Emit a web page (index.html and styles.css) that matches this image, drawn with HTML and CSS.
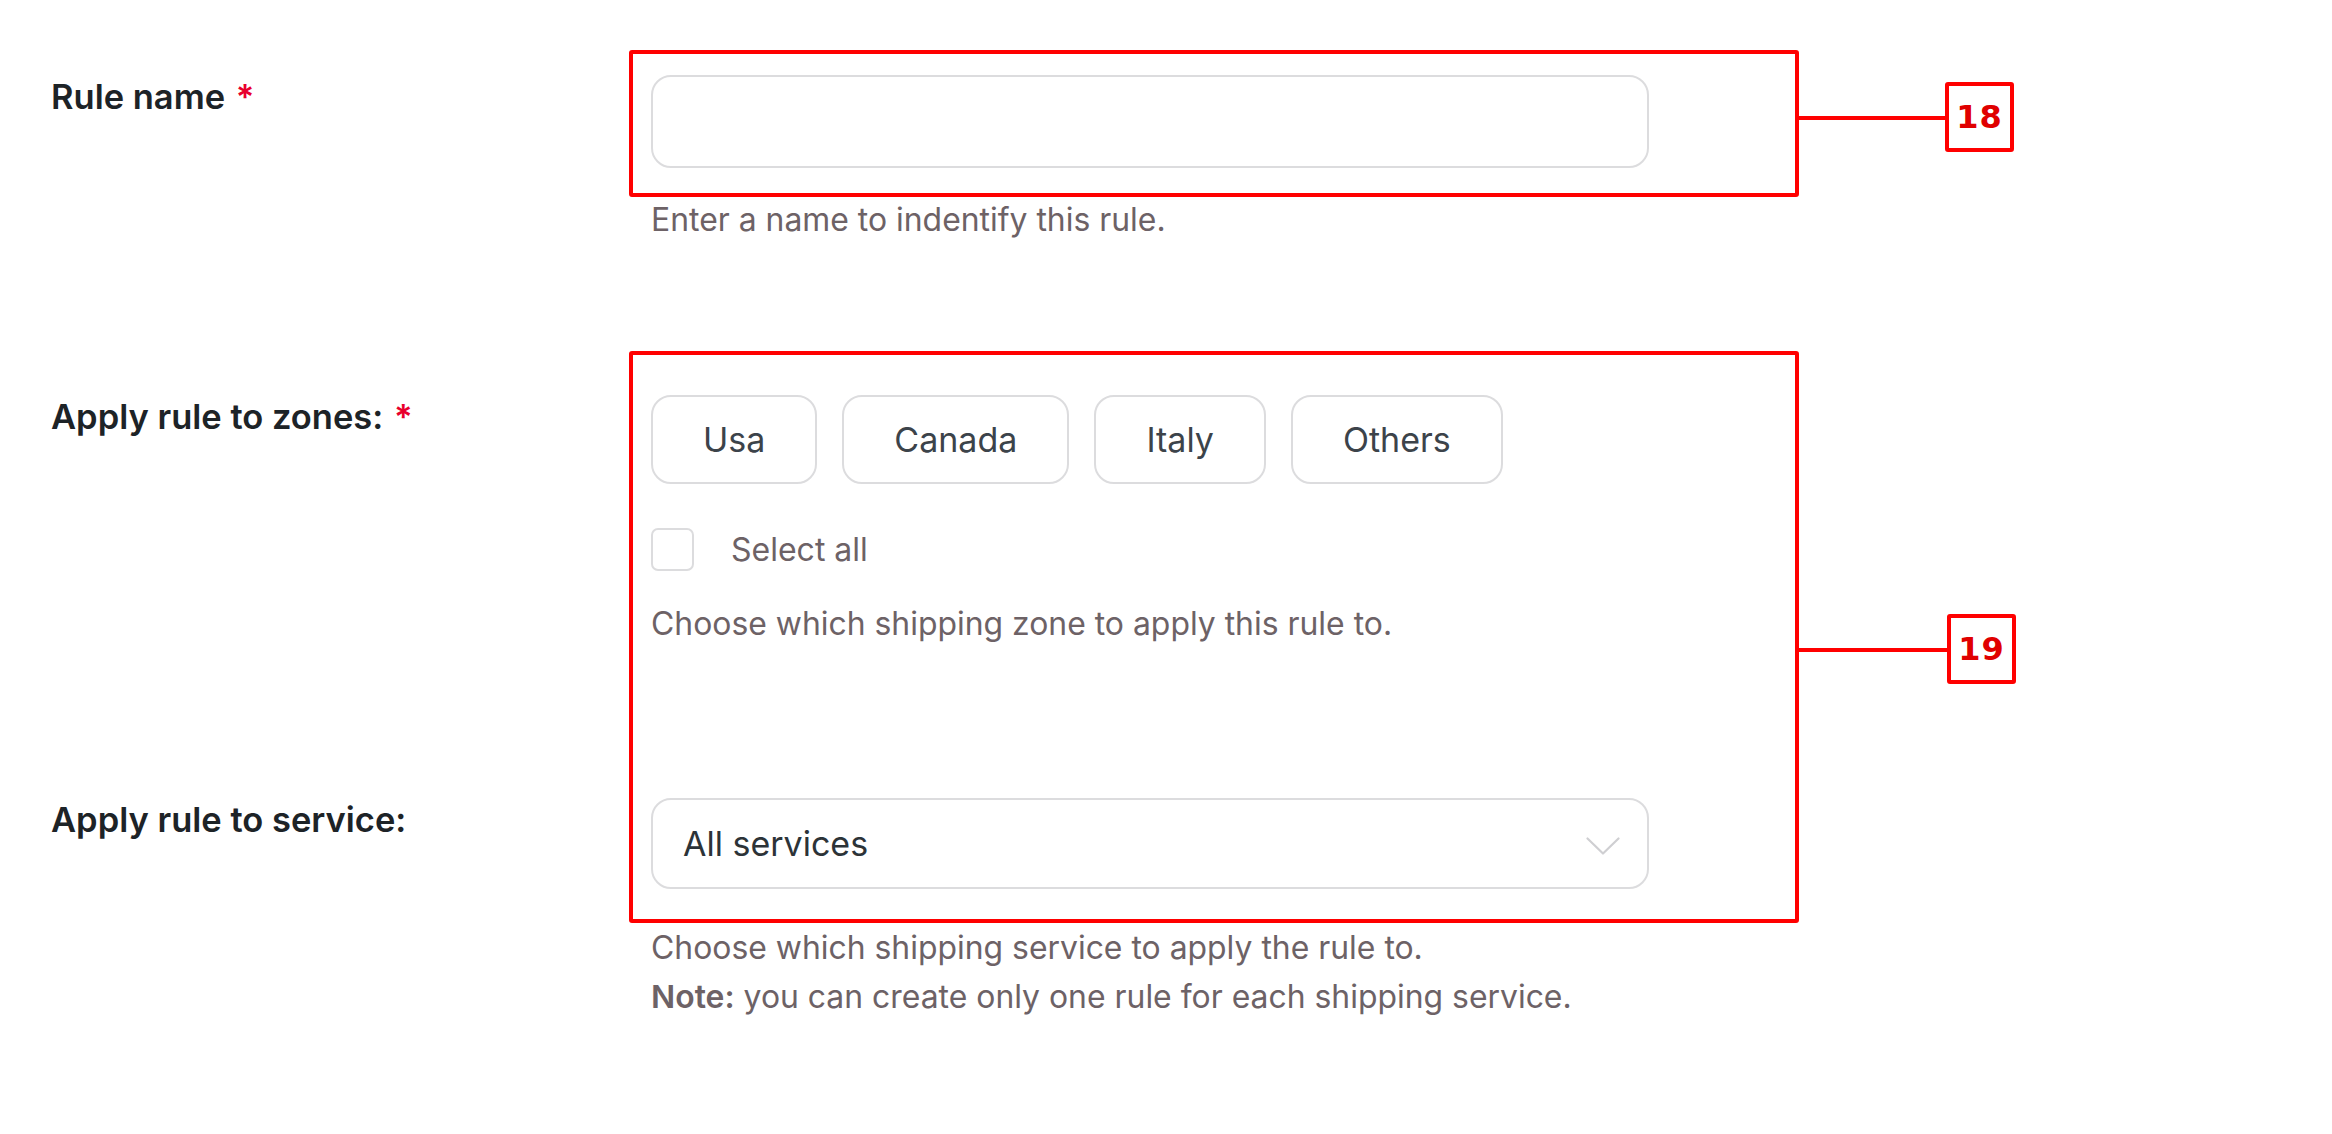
FILE: index.html
```html
<!DOCTYPE html>
<html lang="en">
<head>
<meta charset="utf-8">
<title>Shipping rule</title>
<link rel="stylesheet" href="styles.css">
</head>
<body>
<div class="page">
  <div class="row row-name">
    <div class="label">Rule name <span class="req">*</span></div>
    <div class="field">
      <input class="text-input" type="text" aria-label="Rule name">
      <p class="desc desc-name">Enter a name to indentify this rule.</p>
    </div>
  </div>

  <div class="row row-zones">
    <div class="label">Apply rule to zones: <span class="req">*</span></div>
    <div class="field">
      <div class="zones">
        <span class="zone">Usa</span>
        <span class="zone">Canada</span>
        <span class="zone">Italy</span>
        <span class="zone">Others</span>
      </div>
      <div class="select-all">
        <span class="checkbox"></span>
        <span class="select-all-text">Select all</span>
      </div>
      <p class="desc desc-zones">Choose which shipping zone to apply this rule to.</p>
    </div>
  </div>

  <div class="row row-service">
    <div class="label">Apply rule to service:</div>
    <div class="field">
      <div class="select">
        <span class="select-value">All services</span>
        <svg class="chevron" width="34" height="18" viewBox="0 0 34 18" aria-hidden="true">
          <path d="M1.5 1.5 L17 16.5 L32.5 1.5" fill="none" stroke="#cfcfd2" stroke-width="2.2" stroke-linecap="round" stroke-linejoin="round"/>
        </svg>
      </div>
      <p class="desc desc-service">Choose which shipping service to apply the rule to.<br><strong>Note:</strong> you can create only one rule for each shipping service.</p>
    </div>
  </div>

  <div class="anno anno-18">
    <div class="anno-box"></div>
    <div class="anno-line"></div>
    <div class="anno-badge">18</div>
  </div>
  <div class="anno anno-19">
    <div class="anno-box"></div>
    <div class="anno-line"></div>
    <div class="anno-badge">19</div>
  </div>
</div>
</body>
</html>
```

FILE: styles.css
```css
html, body {
  margin: 0;
  padding: 0;
  background: #ffffff;
}

body {
  font-family: Inter, "Noto Sans", "Liberation Sans", sans-serif;
  width: 2332px;
  height: 1134px;
  overflow: hidden;
}

.page {
  position: relative;
  padding: 75px 0 0 51px;
  box-sizing: border-box;
  height: 1134px;
}

.row {
  display: grid;
  grid-template-columns: 600px 998px;
}

.row-zones {
  margin-top: 153px;
}

.row-service {
  margin-top: 152px;
}

.label {
  font-size: 34.5px;
  line-height: 48px;
  font-weight: 600;
  color: #1d2327;
  margin-top: -2px;
}

.req {
  color: #e8002d;
  margin-left: 2px;
}

.field {
  display: flex;
  flex-direction: column;
  align-items: flex-start;
}

.text-input {
  display: block;
  width: 998px;
  height: 93px;
  box-sizing: border-box;
  border: 2px solid #dcdcde;
  border-radius: 20px;
  background: #fff;
  margin: 0;
  padding: 0 30px;
  font-family: inherit;
  font-size: 32px;
  outline: none;
}

.desc {
  margin: 0;
  font-size: 31.9px;
  line-height: 45px;
  color: #6d6266;
}

.desc strong {
  font-weight: 600;
}

.desc-name {
  margin-top: 29px;
}

.zones {
  display: flex;
  gap: 25px;
}

.zone {
  display: flex;
  align-items: center;
  justify-content: center;
  height: 89px;
  box-sizing: border-box;
  padding: 0 50px;
  border: 2px solid #dcdcde;
  border-radius: 20px;
  font-size: 34px;
  color: #3c434a;
  background: #fff;
}

.select-all {
  display: flex;
  align-items: center;
  gap: 37px;
  margin-top: 44px;
  height: 43px;
}

.checkbox {
  width: 43px;
  height: 43px;
  box-sizing: border-box;
  border: 2px solid #dcdcde;
  border-radius: 7px;
  background: #fff;
}

.select-all-text {
  font-size: 32px;
  color: #6d6266;
  line-height: 43px;
}

.desc-zones {
  margin-top: 30px;
}

.select {
  display: flex;
  align-items: center;
  justify-content: space-between;
  width: 998px;
  height: 91px;
  box-sizing: border-box;
  border: 2px solid #dcdcde;
  border-radius: 20px;
  padding: 0 27px 0 30px;
}

.select-value {
  font-size: 34px;
  color: #2c3338;
}

.chevron {
  display: block;
  margin-top: 4px;
}

.desc-service {
  margin-top: 34px;
  line-height: 49px;
}

/* annotation overlays */
.anno {
  position: absolute;
  left: 629px;
}

.anno-18 {
  top: 50px;
  width: 1316px;
  height: 147px;
}

.anno-19 {
  top: 351px;
  width: 1318px;
  height: 572px;
}

.anno-box {
  position: absolute;
  left: 0;
  top: 0;
  width: 1170px;
  height: 100%;
  box-sizing: border-box;
  border: 4px solid #ff0000;
  border-radius: 3px;
}

.anno-line {
  position: absolute;
  left: 1168px;
  height: 4px;
  background: #ff0000;
}

.anno-18 .anno-line {
  top: 66px;
  width: 150px;
}

.anno-19 .anno-line {
  top: 297px;
  width: 152px;
}

.anno-badge {
  position: absolute;
  width: 69px;
  height: 70px;
  box-sizing: border-box;
  border: 4px solid #ff0000;
  border-radius: 3px;
  background: #fff;
  display: flex;
  align-items: center;
  justify-content: center;
  font-family: "DejaVu Sans", sans-serif;
  font-weight: 700;
  font-size: 32px;
  color: #e00000;
  letter-spacing: 1px;
}

.anno-18 .anno-badge {
  left: 1316px;
  top: 32px;
}

.anno-19 .anno-badge {
  left: 1318px;
  top: 263px;
}
```
